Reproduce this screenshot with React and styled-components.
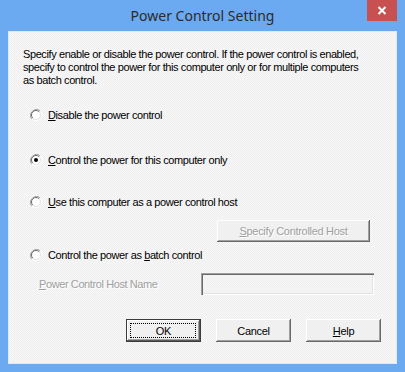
import React from "react";
import styled, { createGlobalStyle } from "styled-components";

const GlobalStyle = createGlobalStyle`
    html, body {
        margin: 0;
        padding: 0;
        background: #6ba9f1;
    }
    * {
        box-sizing: border-box;
    }
`;

const Window = styled.div`
    width: 405px;
    height: 372px;
    background: #6ba9f1;
    display: flex;
    flex-direction: column;
    padding: 0 8px 8px;
    font-family: "Liberation Sans", Arial, sans-serif;
`;

const TitleBar = styled.div`
    height: 31px;
    display: flex;
    align-items: center;
    justify-content: center;
    position: relative;
`;

const Title = styled.span`
    font-family: "Noto Sans", "Open Sans", sans-serif;
    font-size: 14px;
    color: #2b2b2b;
    margin-top: -1px;
`;

const CloseBtn = styled.div`
    position: absolute;
    top: 0;
    right: 0;
    width: 30px;
    height: 21px;
    background: #c75050;
    display: flex;
    align-items: center;
    justify-content: center;
`;

const Client = styled.div`
    flex: 1;
    border: 1px solid #dde9f8;
    background: repeating-conic-gradient(#efefef 0 25%, #f7f7f7 0 50%) 0 0 / 2px 2px;
    display: flex;
    flex-direction: column;
    padding: 16px 15px 0 14px;
    font-size: 11px;
    color: #000;
`;

const Intro = styled.p`
    margin: 0;
    line-height: 13px;
    letter-spacing: -0.4px;
`;

const RadioRow = styled.label`
    display: flex;
    align-items: center;
    gap: 6px;
    height: 16px;
    margin-left: 7px;
    margin-top: ${(p) => p.$top}px;
    letter-spacing: -0.4px;
`;

const Key = styled.span`
    text-decoration: underline;
    text-underline-offset: 1px;
`;

const Row = styled.div`
    display: flex;
    align-items: center;
    justify-content: ${(p) => p.$justify || "flex-start"};
    margin-top: ${(p) => p.$top}px;
    padding-right: ${(p) => p.$right || 0}px;
    gap: ${(p) => p.$gap || 0}px;
`;

const Button = styled.button`
    width: ${(p) => p.$w || 75}px;
    height: ${(p) => p.$h || 23}px;
    font-family: "Liberation Sans", Arial, sans-serif;
    font-size: 11px;
    letter-spacing: -0.3px;
    padding: 0;
    border: none;
    background: #f0f0f0;
    color: ${(p) => (p.disabled ? "#a0a0a0" : "#000")};
    text-shadow: ${(p) => (p.disabled ? "1px 1px #ffffff" : "none")};
    box-shadow: ${(p) =>
        p.$default
            ? "inset 0 0 0 1px #3c3c3c, inset -2px -2px #5a5a5a, inset 2px 2px #fff, inset -3px -3px #a0a0a0"
            : "inset -1px -1px #696969, inset 1px 1px #fff, inset -2px -2px #a0a0a0"};
    position: relative;
    display: flex;
    align-items: center;
    justify-content: center;
`;

const FocusRing = styled.span`
    position: absolute;
    inset: 4px 5px 4px 4px;
    border: 1px dotted #000;
`;

const DisabledLabel = styled.span`
    color: #a0a0a0;
    text-shadow: 1px 1px #ffffff;
    letter-spacing: -0.4px;
    margin-left: 16px;
    width: 162px;
`;

const TextBox = styled.div`
    width: 173px;
    height: 22px;
    box-shadow: inset 1px 1px #a0a0a0, inset 2px 2px #696969, inset -1px -1px #ffffff, inset -2px -2px #e3e3e3;
`;

function Radio({ checked }) {
    return (
        <svg width="12" height="12" viewBox="0 0 12 12">
            <path d="M10.2 1.8 A6 6 0 0 0 1.8 10.2" fill="none" stroke="#a0a0a0" strokeWidth="1" />
            <path d="M1.8 10.2 A6 6 0 0 0 10.2 1.8" fill="none" stroke="#ffffff" strokeWidth="1" />
            <circle cx="6" cy="6" r="4.6" fill="#ffffff" />
            <path d="M9.2 2.8 A4.5 4.5 0 0 0 2.8 9.2" fill="none" stroke="#696969" strokeWidth="1" />
            <path d="M2.8 9.2 A4.5 4.5 0 0 0 9.2 2.8" fill="none" stroke="#e3e3e3" strokeWidth="1" />
            {checked && <circle cx="6" cy="6" r="2" fill="#000" />}
        </svg>
    );
}

export default function App() {
    return (
        <>
            <GlobalStyle />
            <Window>
                <TitleBar>
                    <Title>Power Control Setting</Title>
                    <CloseBtn>
                        <svg width="10" height="9" viewBox="0 0 10 9">
                            <path d="M1.5 1 L8.5 8 M8.5 1 L1.5 8" stroke="#fff" strokeWidth="2" />
                        </svg>
                    </CloseBtn>
                </TitleBar>
                <Client>
                    <Intro>
                        Specify enable or disable the power control. If the power control is enabled,
                        <br />
                        specify to control the power for this computer only or for multiple computers
                        <br />
                        as batch control.
                    </Intro>
                    <RadioRow $top={20}>
                        <Radio />
                        <span>
                            <Key>D</Key>isable the power control
                        </span>
                    </RadioRow>
                    <RadioRow $top={29}>
                        <Radio checked />
                        <span>
                            <Key>C</Key>ontrol the power for this computer only
                        </span>
                    </RadioRow>
                    <RadioRow $top={26}>
                        <Radio />
                        <span>
                            <Key>U</Key>se this computer as a power control host
                        </span>
                    </RadioRow>
                    <Row $top={10} $justify="flex-end" $right={11}>
                        <Button disabled $w={153} $h={22}>
                            <span>
                                <Key>S</Key>pecify Controlled Host
                            </span>
                        </Button>
                    </Row>
                    <RadioRow $top={5}>
                        <Radio />
                        <span>
                            Control the power as <Key>b</Key>atch control
                        </span>
                    </RadioRow>
                    <Row $top={10}>
                        <DisabledLabel>
                            <Key>P</Key>ower Control Host Name
                        </DisabledLabel>
                        <TextBox />
                    </Row>
                    <Row $top={24} $justify="flex-end" $gap={15}>
                        <Button $default>
                            <FocusRing />
                            OK
                        </Button>
                        <Button>Cancel</Button>
                        <Button>
                            <span>
                                <Key>H</Key>elp
                            </span>
                        </Button>
                    </Row>
                </Client>
            </Window>
        </>
    );
}
